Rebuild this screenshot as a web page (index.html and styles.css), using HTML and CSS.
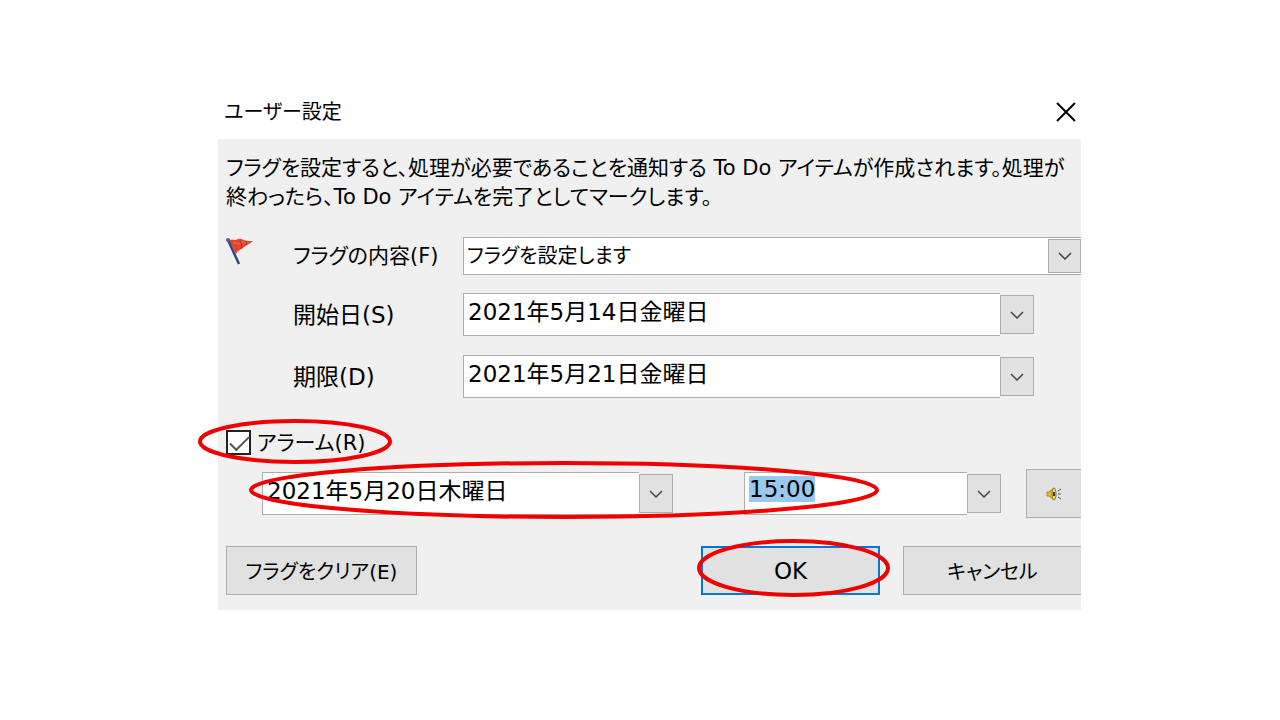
FILE: index.html
```html
<!DOCTYPE html>
<html lang="ja">
<head>
    <meta charset="UTF-8">
    <meta name="viewport" content="width=device-width, initial-scale=1.0">
    <title>ユーザー設定</title>
    <link rel="stylesheet" href="styles.css">
</head>
<body>

<main class="dialog">
    <header class="title-bar">
        <h1>ユーザー設定</h1>
        <button type="button" class="close" aria-label="閉じる">
            <svg width="20" height="20" viewBox="0 0 20 20"><path d="M1 1l18 18M19 1L1 19"/></svg>
        </button>
    </header>

    <form class="panel">
        <p class="description">フラグを設定すると、処理が必要であることを通知する To Do アイテムが作成されます。処理が<br>終わったら、To Do アイテムを完了としてマークします。</p>

        <div class="form-row">
            <svg class="flag" width="30" height="32" viewBox="0 0 30 32">
                <path d="M3 3c4-1 6 1 9-1 4-1 6 3 15 2-3 3-7 4-9 6-3 3-5 2-8 7z" fill="#e2452b"/>
                <path d="M7 6c3-1 5 2 8 0s5 1 8 0" fill="none" stroke="#f0623f" stroke-width="1.5"/>
                <path d="M14 4q3 3 1 8M20 4q1 2 0 4" fill="none" stroke="#b5301f"/>
                <path d="M2 3l11 24" stroke="#2f4a85" stroke-width="2.5"/>
                <circle cx="2" cy="3" r="2" fill="#56657f"/>
            </svg>
            <label for="flag-to" class="flag-label">フラグの内容(F)</label>
            <div class="select-box">
                <select id="flag-to"><option>フラグを設定します</option></select>
                <span class="arrow"><svg width="14" height="8" viewBox="0 0 14 8"><path d="M1 1l6 6 6-6"/></svg></span>
            </div>
        </div>

        <div class="form-row">
            <label for="start-date">開始日(S)</label>
            <div class="combo">
                <input type="text" id="start-date" value="2021年5月14日金曜日">
                <button type="button" class="drop" aria-label="開始日を選択"><svg width="14" height="8" viewBox="0 0 14 8"><path d="M1 1l6 6 6-6"/></svg></button>
            </div>
        </div>

        <div class="form-row">
            <label for="due-date">期限(D)</label>
            <div class="combo">
                <input type="text" id="due-date" value="2021年5月21日金曜日">
                <button type="button" class="drop" aria-label="期限を選択"><svg width="14" height="8" viewBox="0 0 14 8"><path d="M1 1l6 6 6-6"/></svg></button>
            </div>
        </div>

        <div class="alarm-check">
            <input type="checkbox" id="alarm" checked>
            <label for="alarm">アラーム(R)</label>
            <svg class="ring ring-check"><ellipse cx="50%" cy="50%" rx="50%" ry="50%"/></svg>
        </div>

        <div class="alarm-row">
            <div class="combo alarm-date">
                <input type="text" id="alarm-date" aria-label="アラームの日付" value="2021年5月20日木曜日">
                <button type="button" class="drop" aria-label="日付を選択"><svg width="14" height="8" viewBox="0 0 14 8"><path d="M1 1l6 6 6-6"/></svg></button>
            </div>
            <div class="combo alarm-time">
                <input type="text" id="alarm-time" aria-label="アラームの時刻" value="15:00">
                <button type="button" class="drop" aria-label="時刻を選択"><svg width="14" height="8" viewBox="0 0 14 8"><path d="M1 1l6 6 6-6"/></svg></button>
            </div>
            <button type="button" class="sound" aria-label="サウンド">
                <svg width="16" height="14" viewBox="0 0 16 14">
                    <path d="M1 5h2l5-4v12L3 9H1z" fill="#d9b93f" stroke="#a88a26"/>
                    <ellipse cx="8" cy="7" rx="2" ry="6" fill="#f0dc7a" stroke="#8a701c"/>
                    <path d="M8 5v4" stroke="#4a3a0a" stroke-width="2"/>
                    <path d="M12 4l3-2M12 7h3M12 10l3 2" stroke="#555"/>
                </svg>
            </button>
            <svg class="ring ring-alarm"><ellipse cx="50%" cy="50%" rx="50%" ry="50%"/></svg>
        </div>

        <div class="buttons">
            <button type="button" class="btn clear">フラグをクリア(E)</button>
            <div class="ok-wrap">
                <button type="button" class="btn ok">OK</button>
                <svg class="ring ring-ok"><ellipse cx="50%" cy="50%" rx="50%" ry="50%"/></svg>
            </div>
            <button type="button" class="btn cancel">キャンセル</button>
        </div>
    </form>
</main>

<script>
    // 時刻は選択された状態で開く
    var time = document.getElementById('alarm-time');
    time.focus();
    time.select();
</script>

</body>
</html>
```

FILE: styles.css
```css
* {
    box-sizing: border-box;
}

body {
    margin: 0;
    padding: 84px 199px 40px 218px;
    background-color: #fff;
    color: #000;
}

body, button, input, select {
    font-family: "DejaVu Sans", "Noto Sans CJK JP", sans-serif;
    font-size: 23px;
    font-feature-settings: "palt";
}

.title-bar {
    display: flex;
    justify-content: space-between;
    align-items: center;
    height: 55px;
    padding: 0 5px 0 6px;
}

.title-bar h1 {
    margin: 0;
    padding-top: 2px;
    font-size: 20px;
    font-weight: normal;
    line-height: 29px;
}

.close {
    display: flex;
    padding: 0;
    border: none;
    background: none;
}

.close path {
    stroke: #000;
    stroke-width: 2;
}

.panel {
    padding: 15px 0 15px 8px;
    background-color: #f0f0f0;
}

.description {
    margin: 0 0 25px;
    font-size: 21px;
    line-height: 29px;
    white-space: nowrap;
}

.form-row {
    display: grid;
    grid-template-columns: 67px 170px 1fr;
    align-items: center;
    margin-bottom: 18px;
}

.form-row label {
    grid-column: 2;
    line-height: 30px;
}

.form-row .flag-label {
    font-size: 21px;
}

.flag {
    align-self: start;
}

.select-box {
    position: relative;
    display: flex;
}

.select-box select {
    width: 100%;
    height: 38px;
    padding: 0 40px 0 3px;
    border: 1px solid #adadad;
    border-right: none;
    border-radius: 0;
    background-color: #fff;
    color: #000;
    font-size: 20px;
    appearance: none;
}

.arrow {
    position: absolute;
    top: 2px;
    right: 0;
    bottom: 2px;
    width: 33px;
    display: flex;
    justify-content: center;
    align-items: center;
    border: 1px solid #adadad;
    background-color: #e1e1e1;
    pointer-events: none;
}

.arrow path, .drop path {
    fill: none;
    stroke: #444;
    stroke-width: 1.5;
}

.combo {
    display: flex;
    align-items: center;
    min-width: 0;
    height: 43px;
}

.form-row .combo {
    margin-right: 47px;
}

.form-row:has(.combo) {
    margin-bottom: 19px;
}

.combo input {
    flex: 1;
    min-width: 0;
    height: 43px;
    padding: 0 4px 9px;
    border: 1px solid #adadad;
    border-right: none;
    background-color: #fff;
    color: #000;
    outline: none;
}

.combo input::selection {
    background-color: #99c9ef;
    color: #000;
}

.drop {
    display: flex;
    flex: none;
    justify-content: center;
    align-items: center;
    width: 34px;
    height: 39px;
    padding: 0;
    border: 1px solid #adadad;
    background-color: #e1e1e1;
}

.alarm-check {
    position: relative;
    display: flex;
    align-items: center;
    gap: 6px;
    width: max-content;
    height: 30px;
    margin-top: 29px;
    margin-bottom: 12px;
}

.alarm-check label {
    padding-top: 2px;
    font-size: 21px;
    line-height: 30px;
}

.alarm-check input {
    width: 25px;
    height: 25px;
    margin: 0;
    border: 2px solid #222;
    background-color: #fff;
    appearance: none;
}

.alarm-check input:checked::before {
    content: "";
    display: block;
    width: 17px;
    height: 8px;
    margin: 4px 2px;
    border-left: 2px solid #555;
    border-bottom: 2px solid #555;
    transform: rotate(-45deg);
}

.alarm-row {
    position: relative;
    display: flex;
    align-items: center;
    margin-left: 36px;
    margin-bottom: 28px;
}

.alarm-date {
    flex: 411;
    margin-right: 71px;
}

.alarm-time {
    flex: 257;
    margin-right: 25px;
}

.sound {
    display: flex;
    flex: none;
    justify-content: center;
    align-items: center;
    width: 55px;
    height: 49px;
    padding: 0;
    border: 1px solid #adadad;
    border-right: none;
    background-color: #e1e1e1;
}

.buttons {
    display: flex;
    gap: 23px;
}

.btn {
    height: 49px;
    padding: 0;
    border: 1px solid #adadad;
    background-color: #e1e1e1;
    color: #000;
    font-size: 20px;
}

.clear {
    width: 191px;
    margin-right: auto;
}

.ok-wrap {
    position: relative;
}

.ok {
    width: 179px;
    border: 2px solid #0078d7;
    font-size: 23px;
}

.cancel {
    width: 178px;
    border-right: none;
}

/* 赤い囲み */
.ring {
    position: absolute;
    overflow: visible;
    pointer-events: none;
}

.ring ellipse {
    fill: none;
    stroke: #f00000;
    stroke-width: 4;
}

.ring-check {
    top: -6px;
    left: -26px;
    width: 190px;
    height: 41px;
}

.ring-alarm {
    top: -6px;
    left: -11px;
    width: calc(100% - 193px);
    height: 54px;
}

.ring-ok {
    top: -5px;
    left: -2px;
    width: calc(100% + 10px);
    height: 54px;
}
```
